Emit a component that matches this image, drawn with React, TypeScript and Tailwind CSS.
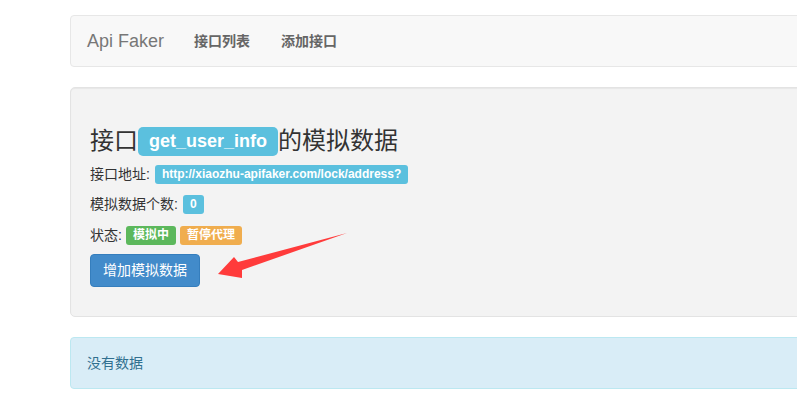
const font = "font-['Liberation_Sans','Noto_Sans_CJK_SC',sans-serif]";

function Label({ color, big, children }: { color: string; big?: boolean; children: React.ReactNode }) {
    const size = big
        ? "text-[18px] px-[11px] pt-[5px] pb-[6px] rounded-[5px]"
        : "text-[12px] px-[7px] pt-[3px] pb-[4px] rounded-[3px]";
    return (
        <span className={`${size} ${color} inline-block leading-none font-bold text-white`}>{children}</span>
    );
}

function Arrow() {
    return (
        <svg className="absolute left-[216px] top-[231px]" width="134" height="50" viewBox="216 231 134 50">
            <polygon
                points="218,274 234,257 238,262 347,233 242,270 242,278"
                fill="#ff3b3b"
            />
        </svg>
    );
}

export default function App() {
    return (
        <div className={`${font} relative w-[797px] h-[401px] overflow-hidden bg-white text-[14px] text-[#333]`}>
            <div className="ml-[70px] w-[760px] pt-[15px]">
                <nav className="flex items-center h-[52px] bg-[#f8f8f8] border border-[#e7e7e7] rounded-[4px] px-[16px]">
                    <span className="text-[18px] text-[#777]">Api Faker</span>
                    <span className="ml-[30px] font-bold text-[#666]">接口列表</span>
                    <span className="ml-[31px] font-bold text-[#666]">添加接口</span>
                </nav>

                <section className="mt-[20px] h-[230px] bg-[#f3f3f3] border border-[#e3e3e3] rounded-[5px] shadow-[inset_0_1px_1px_rgba(0,0,0,0.05)] pl-[19px] pt-[36px]">
                    <h2 className="flex items-center h-[34px] text-[24px] text-[#333]">
                        接口<Label color="bg-[#5bc0de]" big>get_user_info</Label>的模拟数据
                    </h2>
                    <div className="flex items-center h-[28px] mt-[2px] gap-[5px]">
                        <span>接口地址:</span>
                        <Label color="bg-[#5bc0de]">http://xiaozhu-apifaker.com/lock/address?</Label>
                    </div>
                    <div className="flex items-center h-[28px] mt-[2px] gap-[5px]">
                        <span>模拟数据个数:</span>
                        <Label color="bg-[#5bc0de]">0</Label>
                    </div>
                    <div className="flex items-center h-[28px] mt-[3px] gap-[4px]">
                        <span>状态:</span>
                        <Label color="bg-[#5cb85c]">模拟中</Label>
                        <Label color="bg-[#f0ad4e]">暂停代理</Label>
                    </div>
                    <button className="mt-[5px] h-[33px] px-[12px] bg-[#428bca] border border-[#357ebd] rounded-[4px] text-white text-[14px]">
                        增加模拟数据
                    </button>
                </section>

                <div className="mt-[20px] h-[52px] flex items-center px-[16px] bg-[#d9edf7] border border-[#bce8f1] rounded-[4px] text-[#31708f]">
                    没有数据
                </div>
            </div>
            <Arrow />
        </div>
    );
}
